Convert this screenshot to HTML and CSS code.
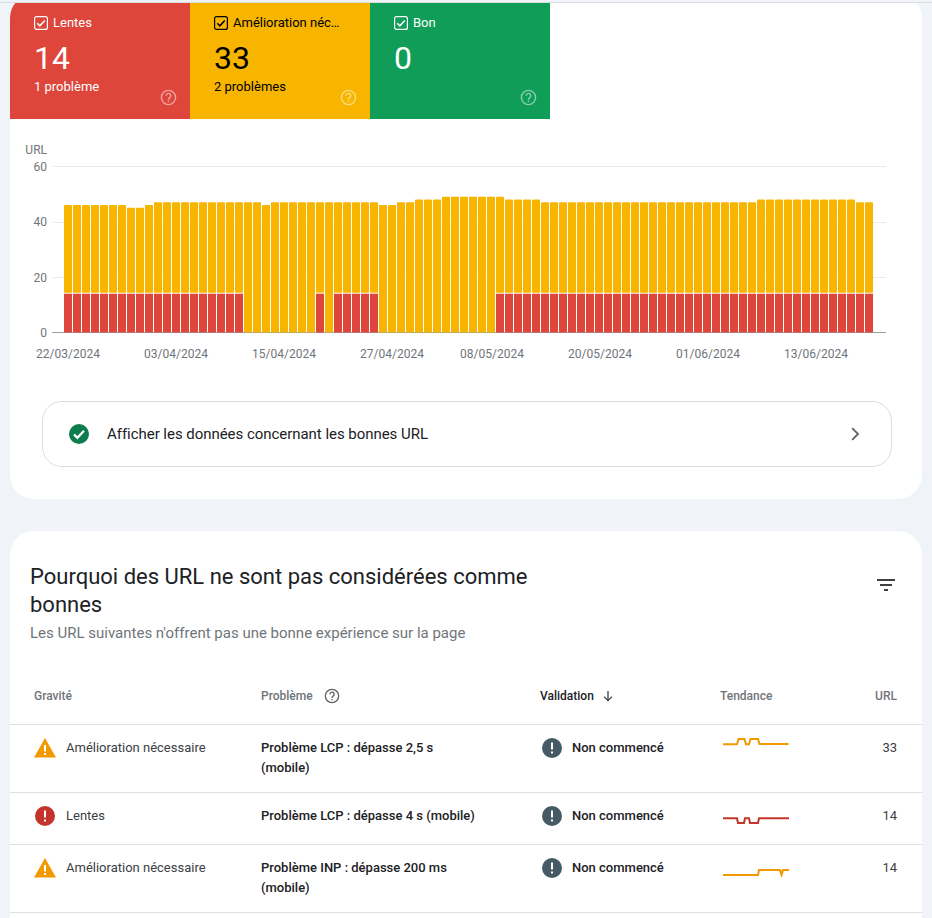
FILE: index.html
```html
<!DOCTYPE html>
<html>
  <head>
    <meta charset="utf-8" />
    <title>Core Web Vitals</title>
    <link rel="stylesheet" href="styles.css">
  </head>
  <body>
    <div class="topline"></div>

    <div class="scroller">
      <section class="card overview">
        <div class="tiles">
          <div class="tile tile-red">
            <div class="tile-label">
              <svg class="check" viewBox="0 0 14 14"><rect x="0.6" y="0.6" width="12.8" height="12.8" rx="2" fill="none" stroke="currentColor" stroke-width="1.2"/><path d="M3.3 7.3l2.5 2.5 5-5.4" fill="none" stroke="currentColor" stroke-width="1.5"/></svg>
              <span>Lentes</span>
            </div>
            <div class="tile-value">14</div>
            <div class="tile-sub">1 problème</div>
            <svg class="tile-help" viewBox="0 0 24 24"><use href="#help"/></svg>
          </div>
          <div class="tile tile-yellow">
            <div class="tile-label">
              <svg class="check" viewBox="0 0 14 14"><rect x="0.6" y="0.6" width="12.8" height="12.8" rx="2" fill="none" stroke="currentColor" stroke-width="1.2"/><path d="M3.3 7.3l2.5 2.5 5-5.4" fill="none" stroke="currentColor" stroke-width="1.5"/></svg>
              <span>Amélioration nécessaire</span>
            </div>
            <div class="tile-value">33</div>
            <div class="tile-sub">2 problèmes</div>
            <svg class="tile-help" viewBox="0 0 24 24"><use href="#help"/></svg>
          </div>
          <div class="tile tile-green">
            <div class="tile-label">
              <svg class="check" viewBox="0 0 14 14"><rect x="0.6" y="0.6" width="12.8" height="12.8" rx="2" fill="none" stroke="currentColor" stroke-width="1.2"/><path d="M3.3 7.3l2.5 2.5 5-5.4" fill="none" stroke="currentColor" stroke-width="1.5"/></svg>
              <span>Bon</span>
            </div>
            <div class="tile-value">0</div>
            <div class="tile-sub"></div>
            <svg class="tile-help" viewBox="0 0 24 24"><use href="#help"/></svg>
          </div>
        </div>

        <!-- bars are added by chart.js -->
        <svg id="chart" class="chart" width="912" height="250" viewBox="10 119 912 250">
          <text class="axis-text" x="47" y="154" text-anchor="end">URL</text>
          <text class="axis-text" x="47" y="171" text-anchor="end">60</text>
          <text class="axis-text" x="47" y="226" text-anchor="end">40</text>
          <text class="axis-text" x="47" y="282" text-anchor="end">20</text>
          <text class="axis-text" x="47" y="337" text-anchor="end">0</text>
          <rect class="grid-line" x="52" y="166" width="834" height="1"/>
          <rect class="grid-line" x="52" y="222" width="834" height="1"/>
          <rect class="grid-line" x="52" y="277" width="834" height="1"/>
          <rect class="base-line" x="52" y="332" width="834" height="1"/>
          <text class="axis-text" x="68" y="358" text-anchor="middle">22/03/2024</text>
          <text class="axis-text" x="176" y="358" text-anchor="middle">03/04/2024</text>
          <text class="axis-text" x="284" y="358" text-anchor="middle">15/04/2024</text>
          <text class="axis-text" x="392" y="358" text-anchor="middle">27/04/2024</text>
          <text class="axis-text" x="492" y="358" text-anchor="middle">08/05/2024</text>
          <text class="axis-text" x="600" y="358" text-anchor="middle">20/05/2024</text>
          <text class="axis-text" x="708" y="358" text-anchor="middle">01/06/2024</text>
          <text class="axis-text" x="816" y="358" text-anchor="middle">13/06/2024</text>
        </svg>

        <div class="good-link">
          <svg class="good-icon" viewBox="0 0 20 20"><circle cx="10" cy="10" r="10" fill="#0d7d4d"/><path d="M5 10.4l3.4 3.4 6.6-7" fill="none" stroke="#fff" stroke-width="2.2"/></svg>
          <span class="good-text">Afficher les données concernant les bonnes URL</span>
          <svg class="chevron" viewBox="0 0 24 24"><path d="M9.2 6.2L15 12l-5.8 5.8" fill="none" stroke="#5f6368" stroke-width="1.8"/></svg>
        </div>
      </section>

      <section class="card issues">
        <div class="issues-head">
          <div>
            <h2 class="issues-title">Pourquoi des URL ne sont pas considérées comme bonnes</h2>
            <p class="issues-sub">Les URL suivantes n'offrent pas une bonne expérience sur la page</p>
          </div>
          <svg class="filter" viewBox="0 0 18 12"><path d="M0 0h18v2H0zM3 5h12v2H3zM7 10h4v2H7z" fill="#3c4043"/></svg>
        </div>

        <div class="row row-head">
          <div>Gravité</div>
          <div class="head-help">Problème <svg class="small-help" viewBox="0 0 24 24"><use href="#help"/></svg></div>
          <div class="head-active">Validation <svg class="arrow" viewBox="0 0 12 12"><path d="M6 1v9.5M2 6.6l4 4 4-4" fill="none" stroke="#3c4043" stroke-width="1.3"/></svg></div>
          <div>Tendance</div>
          <div class="cell-url">URL</div>
        </div>

        <div class="row">
          <div class="severity"><svg class="warn" viewBox="0 0 22 20"><path d="M11 0l11 19.5H0z" fill="#f29900"/><path d="M10 7h2v6.5h-2zM10 15h2v2h-2z" fill="#fff"/></svg>Amélioration nécessaire</div>
          <div class="problem">Problème LCP : dépasse 2,5 s (mobile)</div>
          <div class="status"><svg class="status-icon" viewBox="0 0 20 20"><circle cx="10" cy="10" r="10" fill="#455a64"/><path d="M9 4.5h2v7H9zM9 13.5h2v2H9z" fill="#fff"/></svg>Non commencé</div>
          <div><svg class="spark" viewBox="0 0 66 20"><path d="M0 7.3h14l1.5-5.3h6l1.5 5.3h3l1.5-5.3h7.5l1.5 5h29" fill="none" stroke="#f29900" stroke-width="2"/></svg></div>
          <div class="cell-url">33</div>
        </div>

        <div class="row">
          <div class="severity"><svg class="error" viewBox="0 0 20 20"><circle cx="10" cy="10" r="10" fill="#c5342a"/><path d="M9 4.5h2v7H9zM9 13.5h2v2H9z" fill="#fff"/></svg>Lentes</div>
          <div class="problem">Problème LCP : dépasse 4 s (mobile)</div>
          <div class="status"><svg class="status-icon" viewBox="0 0 20 20"><circle cx="10" cy="10" r="10" fill="#455a64"/><path d="M9 4.5h2v7H9zM9 13.5h2v2H9z" fill="#fff"/></svg>Non commencé</div>
          <div><svg class="spark" viewBox="0 0 66 20"><path d="M0 13.3h14l1 4.7h6l1-4.7h4l1 4.7h8l1-4.7h30" fill="none" stroke="#c5342a" stroke-width="2"/></svg></div>
          <div class="cell-url">14</div>
        </div>

        <div class="row">
          <div class="severity"><svg class="warn" viewBox="0 0 22 20"><path d="M11 0l11 19.5H0z" fill="#f29900"/><path d="M10 7h2v6.5h-2zM10 15h2v2h-2z" fill="#fff"/></svg>Amélioration nécessaire</div>
          <div class="problem">Problème INP : dépasse 200 ms (mobile)</div>
          <div class="status"><svg class="status-icon" viewBox="0 0 20 20"><circle cx="10" cy="10" r="10" fill="#455a64"/><path d="M9 4.5h2v7H9zM9 13.5h2v2H9z" fill="#fff"/></svg>Non commencé</div>
          <div><svg class="spark" viewBox="0 0 66 20"><path d="M0 18h35l1-5h21l1.5 5 1.5-5h6" fill="none" stroke="#f29900" stroke-width="2"/></svg></div>
          <div class="cell-url">14</div>
        </div>
      </section>
    </div>

    <svg class="defs" width="0" height="0">
      <symbol id="help" viewBox="0 0 24 24">
        <circle cx="12" cy="12" r="10" fill="none" stroke="currentColor" stroke-width="2"/>
        <path d="M8.8 9.4a3.2 3.2 0 1 1 5 2.7c-1.1.8-1.8 1.4-1.8 2.9" fill="none" stroke="currentColor" stroke-width="2"/>
        <rect x="11" y="16.4" width="2" height="2" fill="currentColor"/>
      </symbol>
    </svg>

    <script src="chart.js"></script>
  </body>
</html>
```

FILE: styles.css
```css
html, body {
  margin: 0;
  padding: 0;
}
body {
  height: 918px;
  overflow: hidden;
  background-color: #f0f4f9;
  font-family: Roboto, Arial, sans-serif;
  color: #202124;
}
.topline {
  height: 3px;
  border-bottom: 1px solid #dadce0;
  box-sizing: border-box;
}
/* the page is scrolled, so the first card's top is cut off */
.scroller {
  height: 915px;
  overflow: hidden;
}
.card {
  width: 912px;
  margin-left: 10px;
  background-color: #fff;
  border-radius: 24px;
}
.overview {
  box-sizing: border-box;
  height: 505px;
  margin-top: -9px;
  padding-top: 9px;
  overflow: hidden;
}
.issues {
  margin-top: 32px;
  height: 387px;
  border-bottom-left-radius: 0;
  border-bottom-right-radius: 0;
  overflow: hidden;
}

/* tiles */
.tiles {
  display: flex;
}
.tile {
  position: relative;
  box-sizing: border-box;
  width: 180px;
  height: 116px;
  padding: 12px 24px 0;
  color: #fff;
}
.tile-red {
  background-color: #de453b;
}
.tile-yellow {
  background-color: #f7b500;
  color: #000;
}
.tile-green {
  background-color: #0f9d58;
}
.tile-label {
  display: flex;
  align-items: center;
  gap: 5px;
  font-size: 13px;
  line-height: 16px;
}
.tile-label span {
  max-width: 107px;
  white-space: nowrap;
  overflow: hidden;
  text-overflow: ellipsis;
}
.check {
  width: 14px;
  height: 14px;
  flex: none;
}
.tile-value {
  margin-top: 7px;
  font-size: 32px;
  line-height: 40px;
}
.tile-sub {
  font-size: 13px;
  line-height: 18px;
}
.tile-help {
  position: absolute;
  right: 13px;
  bottom: 13px;
  width: 17px;
  height: 17px;
  color: #fff;
  opacity: 0.5;
}

/* chart */
.chart {
  display: block;
}
.axis-text {
  font-family: Roboto, Arial, sans-serif;
  font-size: 12px;
  fill: #70757a;
}
.grid-line {
  fill: #ebebeb;
}
.base-line {
  fill: #9e9e9e;
}
.bar-warn {
  fill: #f7b500;
}
.bar-slow {
  fill: #de453b;
}

.good-link {
  display: flex;
  align-items: center;
  box-sizing: border-box;
  width: 850px;
  height: 66px;
  margin: 32px 0 0 32px;
  padding: 0 24px 0 26px;
  border: 1px solid #dadce0;
  border-radius: 20px;
}
.good-icon {
  width: 20px;
  height: 20px;
  flex: none;
}
.good-text {
  margin-left: 18px;
  flex: 1;
  font-size: 15px;
  letter-spacing: -0.04px;
}
.chevron {
  width: 24px;
  height: 24px;
}

/* table */
.issues-head {
  display: flex;
  justify-content: space-between;
  padding: 32px 27px 0 20px;
  height: 128px;
  box-sizing: border-box;
}
.issues-title {
  width: 520px;
  margin: 0;
  font-size: 22px;
  font-weight: 400;
  line-height: 28px;
}
.issues-sub {
  margin: 4px 0 0;
  font-size: 15px;
  line-height: 20px;
  color: #70757a;
}
.filter {
  width: 18px;
  height: 12px;
  margin-top: 16px;
}
.row {
  display: grid;
  grid-template-columns: 227px 279px 180px 1fr 60px;
  padding: 13px 25px 14px 24px;
  border-bottom: 1px solid #e0e0e0;
  font-size: 13px;
  line-height: 20px;
  min-height: 24px;
}
.row-head {
  height: 66px;
  box-sizing: border-box;
  padding-top: 8px;
  padding-bottom: 0;
  align-items: center;
  font-size: 12px;
  font-weight: 500;
  color: #70757a;
}
.row-head > div {
  display: flex;
  align-items: center;
}
.row-head .cell-url {
  justify-content: flex-end;
  color: #70757a;
}
.head-help {
  gap: 11px;
}
.head-active {
  gap: 8px;
  color: #202124;
}
.small-help {
  width: 16px;
  height: 16px;
  color: #5f6368;
}
.arrow {
  width: 12px;
  height: 12px;
}
.severity, .status {
  display: flex;
  gap: 10px;
  color: #3c4043;
}
.status {
  font-weight: 500;
  color: #202124;
}
.warn {
  width: 22px;
  height: 20px;
  flex: none;
}
.error {
  width: 20px;
  height: 20px;
  flex: none;
  margin: 0 1px;
}
.status-icon {
  width: 20px;
  height: 20px;
  flex: none;
  margin-left: 2px;
}
.problem {
  width: 218px;
  font-weight: 500;
}
.spark {
  display: block;
  width: 66px;
  height: 20px;
  margin: -1px 0 0 3px;
}
.cell-url {
  text-align: right;
  color: #3c4043;
}
.defs {
  position: absolute;
}
```

FILE: chart.js
```js
// one value per day: total of slow + needs improvement, and slow only
var totals = [
  46,46,46,46,46,46,46,45,45,46,
  47,47,47,47,47,47,47,47,47,47,47,47,46,
  47,47,47,47,47,47,47,47,47,47,47,47,
  46,46,47,47,48,48,48,
  49,49,49,49,49,49,49,
  48,48,48,48
];
while (totals.length < 77) totals.push(47);
while (totals.length < 88) totals.push(48);
totals.push(47, 47);

function isSlow(i) {
  return i < 20 || i == 28 || (i >= 30 && i <= 34) || i >= 48;
}

var chart = document.getElementById("chart");
var scale = 2.77;
var baseY = 332.5;

function addRect(cls, x, y, w, h) {
  var r = document.createElementNS("http://www.w3.org/2000/svg", "rect");
  r.setAttribute("class", cls);
  r.setAttribute("x", x);
  r.setAttribute("y", y);
  r.setAttribute("width", w);
  r.setAttribute("height", h);
  chart.appendChild(r);
  return r;
}

totals.forEach(function (total, i) {
  var x = 64 + i * 9;
  var top = baseY - total * scale;
  var slowTop = baseY - 14 * scale;
  if (isSlow(i)) {
    addRect("bar-warn", x, top, 8, slowTop - top - 1).setAttribute("rx", 1);
    addRect("bar-slow", x, slowTop, 8, baseY - slowTop);
  } else {
    addRect("bar-warn", x, top, 8, baseY - top).setAttribute("rx", 1);
  }
});
```
